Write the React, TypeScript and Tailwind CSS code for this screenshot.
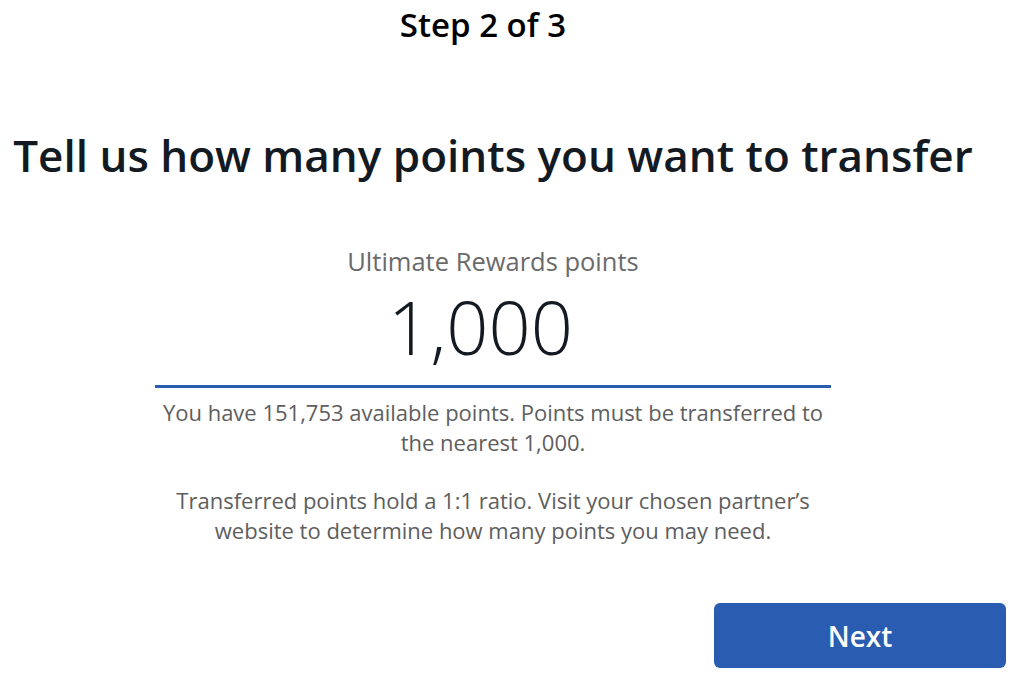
export default function App() {
  return (
    <div className="w-[1024px] h-[694px] bg-white overflow-hidden" style={{ fontFamily: '"Open Sans", sans-serif' }}>
      <div className="w-[986px] flex flex-col items-center">
        <h2 className="mt-[5px] pr-[20px] text-[33px] leading-[40px] font-semibold text-black">Step 2 of 3</h2>

        <h1 className="mt-[82px] text-[44px] leading-[56px] font-semibold text-[#141a22] whitespace-nowrap">
          Tell us how many points you want to transfer
        </h1>

        <div className="mt-[62px] w-[676px] flex flex-col items-center">
          <label className="text-[25.5px] leading-[32px] text-[#6a6a6a]">Ultimate Rewards points</label>
          <div className="mt-[14px] w-full pr-[25px] text-center text-[74px] leading-[72px] font-light text-[#141a22]">1,000</div>
          <div className="mt-[22px] w-full h-[3px] bg-[#2b5cb0]" />
          <p className="mt-[9px] text-center text-[22px] leading-[30px] text-[#5e5e5e]">
            You have 151,753 available points. Points must be transferred to the nearest 1,000.
          </p>
          <p className="mt-[28px] text-center text-[22px] leading-[30px] text-[#5e5e5e]">
            Transferred points hold a 1:1 ratio. Visit your chosen partner’s website to determine how many points you may need.
          </p>
        </div>
      </div>

      <div className="mt-[58px] flex justify-end pr-[18px]">
        <button className="w-[292px] h-[65px] rounded-[6px] bg-[#2a5cb1] text-white text-[28px] font-semibold">
          Next
        </button>
      </div>
    </div>
  );
}
